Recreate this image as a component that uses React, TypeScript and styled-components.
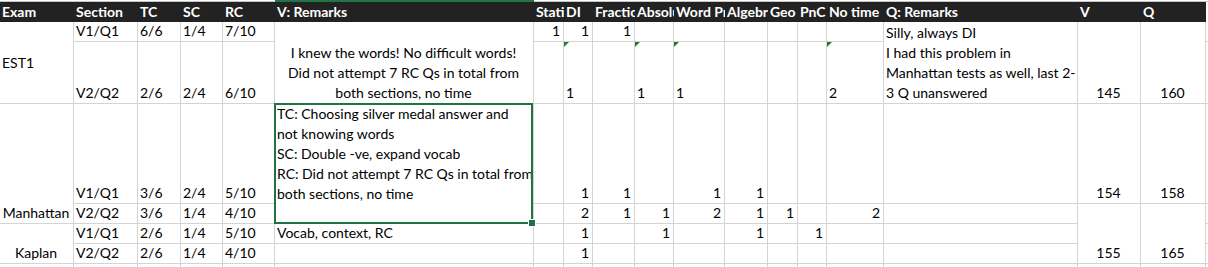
import React from 'react'
import styled, { createGlobalStyle, css } from 'styled-components'

type Align = 'left' | 'right' | 'center'
type VAlign = 'top' | 'middle' | 'bottom'

interface Entry {
    text: string | string[]
    span?: number
    align?: Align
    valign?: VAlign
    flag?: boolean
    selected?: boolean
}

interface CellProps {
    $col: number
    $row: number
    $span: number
    $align: Align
    $valign: VAlign
    $flag: boolean
    $selected: boolean
}

const COL_WIDTHS = [74, 64, 43, 42, 52, 259, 30, 29, 42, 39, 51, 43, 30, 29, 57, 194, 63, 65]
const ROW_HEIGHTS = [20, 62, 100, 20, 20, 20, 20]
const SELECTED_COL = 5
const GRID = '#d4d4d4'
const GREEN = '#217346'

const HEADERS = ['Exam', 'Section', 'TC', 'SC', 'RC', 'V: Remarks', 'Statistics', 'DI', 'Fractions', 'Absolute',
    'Word Problems', 'Algebra', 'Geo', 'PnC', 'No time', 'Q: Remarks', 'V', 'Q']

const VALIGN: Record<VAlign, string> = { top: 'flex-start', middle: 'center', bottom: 'flex-end' }

const num = (text: string): Entry => ({ text, align: 'right' })
const flagged = (text: string): Entry => ({ text, flag: true })
const mid = (text: string, span = 1): Entry => ({ text, span, align: 'center' })

const ENTRIES: Record<string, Entry> = {
    '0-0': { text: 'EST1', span: 2, valign: 'middle' },
    '0-1': { text: 'V1/Q1' }, '0-2': { text: '6/6' }, '0-3': { text: '1/4' }, '0-4': { text: '7/10' },
    '0-5': {
        text: ['I knew the words! No difficult words!', 'Did not attempt 7 RC Qs in total from', 'both sections, no time'],
        span: 2, align: 'center',
    },
    '0-6': num('1'), '0-7': num('1'), '0-8': num('1'),
    '0-15': {
        text: ['Silly, always DI', 'I had this problem in', 'Manhattan tests as well, last 2-', '3 Q unanswered'],
        span: 2,
    },
    '0-16': mid('145', 2), '0-17': mid('160', 2),

    '1-1': { text: 'V2/Q2' }, '1-2': { text: '2/6' }, '1-3': { text: '2/4' }, '1-4': { text: '6/10' },
    '1-7': flagged('1'), '1-9': flagged('1'), '1-10': flagged('1'), '1-14': flagged('2'),

    '2-0': mid('Manhattan', 2),
    '2-1': { text: 'V1/Q1' }, '2-2': { text: '3/6' }, '2-3': { text: '2/4' }, '2-4': { text: '5/10' },
    '2-5': {
        text: ['TC: Choosing silver medal answer and', 'not knowing words', 'SC: Double -ve, expand vocab',
            'RC: Did not attempt 7 RC Qs in total from', 'both sections, no time'],
        span: 2, valign: 'top', selected: true,
    },
    '2-7': num('1'), '2-8': num('1'), '2-10': num('1'), '2-11': num('1'),
    '2-16': mid('154'), '2-17': mid('158'),

    '3-1': { text: 'V2/Q2' }, '3-2': { text: '3/6' }, '3-3': { text: '1/4' }, '3-4': { text: '4/10' },
    '3-7': num('2'), '3-8': num('1'), '3-9': num('1'), '3-10': num('2'), '3-11': num('1'), '3-12': num('1'),
    '3-14': num('2'),
    '3-16': mid('155', 3), '3-17': mid('165', 3),

    '4-0': mid('Kaplan', 2),
    '4-1': { text: 'V1/Q1' }, '4-2': { text: '2/6' }, '4-3': { text: '1/4' }, '4-4': { text: '5/10' },
    '4-5': { text: 'Vocab, context, RC' },
    '4-7': num('1'), '4-9': num('1'), '4-11': num('1'), '4-13': num('1'),

    '5-1': { text: 'V2/Q2' }, '5-2': { text: '2/6' }, '5-3': { text: '1/4' }, '5-4': { text: '4/10' },
    '5-7': num('1'),
}

const GlobalStyle = createGlobalStyle`
    html, body {
        margin: 0;
        padding: 0;
        background: #fff;
        overflow: hidden;
    }
    body {
        font-family: Lato, 'Liberation Sans', sans-serif;
    }
`

const Sheet = styled.div`
    display: grid;
    grid-template-columns: ${COL_WIDTHS.map(w => `${w}px`).join(' ')} 1fr;
    grid-template-rows: 2px 20px ${ROW_HEIGHTS.map(h => `${h}px`).join(' ')};
    width: 1208px;
    height: 267px;
    overflow: hidden;
    font-size: 14px;
    color: #000;
`

const ColumnEdge = styled.div<{ $active: boolean }>`
    box-sizing: border-box;
    background: ${p => p.$active ? GREEN : '#fff'};
    border-bottom: 1px solid ${p => p.$active ? GREEN : '#c6c6c6'};
`

const HeaderCell = styled.div<{ $blank: boolean }>`
    background: ${p => p.$blank ? '#fff' : '#222'};
    color: #fff;
    font-weight: 700;
    line-height: 20px;
    padding-left: 2px;
    white-space: nowrap;
    overflow: hidden;
`

const Cell = styled.div<CellProps>`
    grid-column: ${p => p.$col + 1};
    grid-row: ${p => p.$row + 3} / span ${p => p.$span};
    position: relative;
    display: flex;
    flex-direction: column;
    justify-content: ${p => VALIGN[p.$valign]};
    text-align: ${p => p.$align};
    box-sizing: border-box;
    border-right: 1px solid ${GRID};
    border-bottom: 1px solid ${GRID};
    padding: 0 3px 0 2px;
    line-height: 20px;
    white-space: nowrap;
    overflow: ${p => p.$selected ? 'visible' : 'hidden'};
    ${p => p.$flag && css`
        &::before {
            content: '';
            position: absolute;
            top: 0;
            left: 0;
            border-top: 5px solid #1e7b34;
            border-right: 5px solid transparent;
        }
    `}
    ${p => p.$selected && css`
        z-index: 2;
        &::after {
            content: '';
            position: absolute;
            top: -1px;
            left: -1px;
            right: 0;
            bottom: -1px;
            border: 2px solid ${GREEN};
            pointer-events: none;
        }
    `}
`

const FillHandle = styled.span`
    position: absolute;
    right: -2px;
    bottom: -3px;
    width: 6px;
    height: 6px;
    background: ${GREEN};
    box-shadow: 0 0 0 1px #fff;
    z-index: 3;
`

const Line = styled.div`
    white-space: nowrap;
`

const buildCells = () => {
    const covered = new Set<string>()
    const cells: React.ReactNode[] = []
    for (let r = 0; r < ROW_HEIGHTS.length; r++) {
        for (let c = 0; c <= COL_WIDTHS.length; c++) {
            const key = `${r}-${c}`
            if (covered.has(key)) continue
            const entry = ENTRIES[key]
            const span = entry?.span ?? 1
            for (let s = 1; s < span; s++) covered.add(`${r + s}-${c}`)
            const lines = entry ? (Array.isArray(entry.text) ? entry.text : [entry.text]) : []
            cells.push(
                <Cell key={key} $col={c} $row={r} $span={span}
                    $align={entry?.align ?? 'left'} $valign={entry?.valign ?? 'bottom'}
                    $flag={!!entry?.flag} $selected={!!entry?.selected}>
                    {lines.map((line, i) => <Line key={i}>{line}</Line>)}
                    {entry?.selected && <FillHandle />}
                </Cell>
            )
        }
    }
    return cells
}

const App: React.FC = () => {
    return <React.Fragment>
        <GlobalStyle />
        <Sheet>
            {COL_WIDTHS.map((_, i) => <ColumnEdge key={`e${i}`} $active={i === SELECTED_COL} />)}
            <ColumnEdge $active={false} />
            {HEADERS.map(title => <HeaderCell key={title} $blank={false}>{title}</HeaderCell>)}
            <HeaderCell $blank={true} />
            {buildCells()}
        </Sheet>
    </React.Fragment>
}

export default App
